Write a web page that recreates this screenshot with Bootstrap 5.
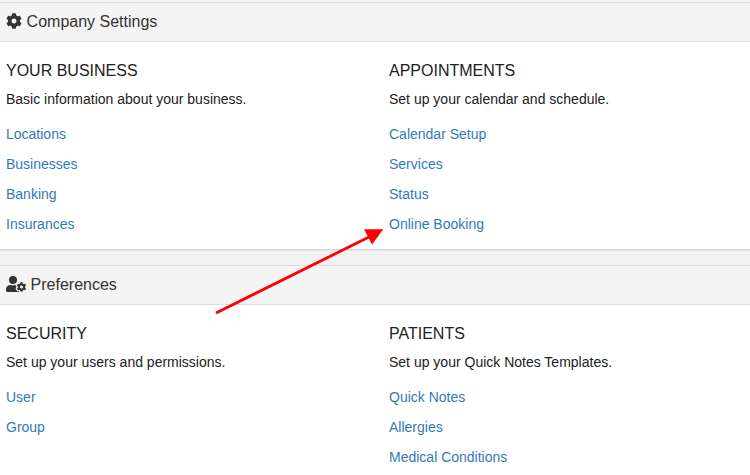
<!DOCTYPE html>
<html lang="en">
<head>
<meta charset="utf-8">
<meta name="viewport" content="width=device-width, initial-scale=1">
<title>Company Settings</title>
<link href="https://cdn.jsdelivr.net/npm/bootstrap@5.3.0/dist/css/bootstrap.min.css" rel="stylesheet">
<style>
  body { font-family: "Liberation Sans", Arial, sans-serif; font-size: 14px; line-height: 20px; color: #212121; background: #f2f2f2; height: 475px; }
  .settings-page { width: 766px; padding-top: 2px; }
  .settings-panel { background: #fff; border-top: 1px solid #ddd; }
  .panel-one { height: 248px; border-bottom: 1px solid #d8d8d8; box-shadow: 0 1px 1px rgba(0,0,0,.05); margin-bottom: 15px; }
  .panel-two { height: 210px; }
  .panel-title { height: 39px; padding: 0 6px; background: #f4f4f4; border-bottom: 1px solid #ddd; font-size: 16px; line-height: 20px; color: #333; gap: 4.6px; }
  .panel-title svg { fill: #333; margin-bottom: 2px; }
  .group-col { padding: 19px 6px 0; }
  .group-title { font-size: 16px; line-height: 20px; margin-bottom: 8px; }
  .group-text { margin-bottom: 10px; }
  .group-links a { color: #337ab7; line-height: 30px; }
  .pointer { left: 205px; top: 215px; }
</style>
</head>
<body class="overflow-hidden position-relative">
<main class="settings-page">
  <section class="settings-panel panel-one">
    <h1 class="panel-title d-flex align-items-center fw-normal mb-0">
      <svg width="16" height="16" viewBox="0 0 512 512" aria-hidden="true"><path id="cog" d="M487.4 315.7l-42.6-24.6c4.3-23.2 4.3-47 0-70.2l42.6-24.6c4.9-2.8 7.1-8.6 5.5-14-11.1-35.6-30-67.8-54.7-94.6-3.8-4.1-10-5.1-14.8-2.3L380.8 110c-17.9-15.4-38.5-27.3-60.8-35.1V25.8c0-5.6-3.9-10.5-9.4-11.7-36.7-8.2-74.3-7.8-109.2 0-5.5 1.2-9.4 6.1-9.4 11.7V75c-22.2 7.9-42.8 19.8-60.8 35.1L88.7 85.5c-4.9-2.8-11-1.9-14.8 2.3-24.7 26.7-43.6 58.9-54.7 94.6-1.7 5.4.6 11.2 5.5 14L67.3 221c-4.3 23.2-4.3 47 0 70.2l-42.6 24.6c-4.9 2.8-7.1 8.6-5.5 14 11.1 35.6 30 67.8 54.7 94.6 3.8 4.1 10 5.1 14.8 2.3l42.6-24.6c17.9 15.4 38.5 27.3 60.8 35.1v49.2c0 5.6 3.9 10.5 9.4 11.7 36.7 8.2 74.3 7.8 109.2 0 5.5-1.2 9.4-6.1 9.4-11.7v-49.2c22.2-7.9 42.8-19.8 60.8-35.1l42.6 24.6c4.9 2.8 11 1.9 14.8-2.3 24.7-26.7 43.6-58.9 54.7-94.6 1.5-5.5-.7-11.3-5.6-14.1zM256 336c-44.1 0-80-35.9-80-80s35.9-80 80-80 80 35.9 80 80-35.9 80-80 80z"/></svg>
      <span>Company Settings</span>
    </h1>
    <div class="row g-0">
      <div class="col-6 group-col">
        <h2 class="group-title fw-normal">YOUR BUSINESS</h2>
        <p class="group-text">Basic information about your business.</p>
        <div class="group-links d-flex flex-column align-items-start">
          <a class="text-decoration-none" href="#">Locations</a>
          <a class="text-decoration-none" href="#">Businesses</a>
          <a class="text-decoration-none" href="#">Banking</a>
          <a class="text-decoration-none" href="#">Insurances</a>
        </div>
      </div>
      <div class="col-6 group-col">
        <h2 class="group-title fw-normal">APPOINTMENTS</h2>
        <p class="group-text">Set up your calendar and schedule.</p>
        <div class="group-links d-flex flex-column align-items-start">
          <a class="text-decoration-none" href="#">Calendar Setup</a>
          <a class="text-decoration-none" href="#">Services</a>
          <a class="text-decoration-none" href="#">Status</a>
          <a class="text-decoration-none" href="#">Online Booking</a>
        </div>
      </div>
    </div>
  </section>
  <section class="settings-panel panel-two">
    <h1 class="panel-title d-flex align-items-center fw-normal mb-0">
      <svg width="20" height="16" viewBox="0 0 640 512" aria-hidden="true">
        <circle cx="224" cy="128" r="128"/>
        <path d="M314 288h-17c-22 10-47 16-73 16s-51-6-73-16h-17C60 288 0 348 0 422v42c0 26 21 48 48 48h352c10 0 18-2 26-7-1-4-2-7-2-11v-9l-8-4-8 4c-7 4-14 6-22 6-12 0-24-5-32-14-20-22-35-47-44-76-6-20 2-40 20-50l8-5v-9l-8-4c-12-8-21-20-22-34z"/>
        <use href="#cog" transform="translate(340 196) scale(.61)"/>
      </svg>
      <span>Preferences</span>
    </h1>
    <div class="row g-0">
      <div class="col-6 group-col">
        <h2 class="group-title fw-normal">SECURITY</h2>
        <p class="group-text">Set up your users and permissions.</p>
        <div class="group-links d-flex flex-column align-items-start">
          <a class="text-decoration-none" href="#">User</a>
          <a class="text-decoration-none" href="#">Group</a>
        </div>
      </div>
      <div class="col-6 group-col">
        <h2 class="group-title fw-normal">PATIENTS</h2>
        <p class="group-text">Set up your Quick Notes Templates.</p>
        <div class="group-links d-flex flex-column align-items-start">
          <a class="text-decoration-none" href="#">Quick Notes</a>
          <a class="text-decoration-none" href="#">Allergies</a>
          <a class="text-decoration-none" href="#">Medical Conditions</a>
        </div>
      </div>
    </div>
  </section>
</main>
<svg class="pointer position-absolute pe-none" width="190" height="105" viewBox="0 0 190 105" aria-hidden="true">
  <path d="M11 98L166 21" stroke="#f00" stroke-width="2.8" fill="none"/>
  <path d="M178.300 14.200L159 14.200L167 29.500z" fill="#f00"/>
</svg>
<script src="https://cdn.jsdelivr.net/npm/bootstrap@5.3.0/dist/js/bootstrap.bundle.min.js"></script>
</body>
</html>
